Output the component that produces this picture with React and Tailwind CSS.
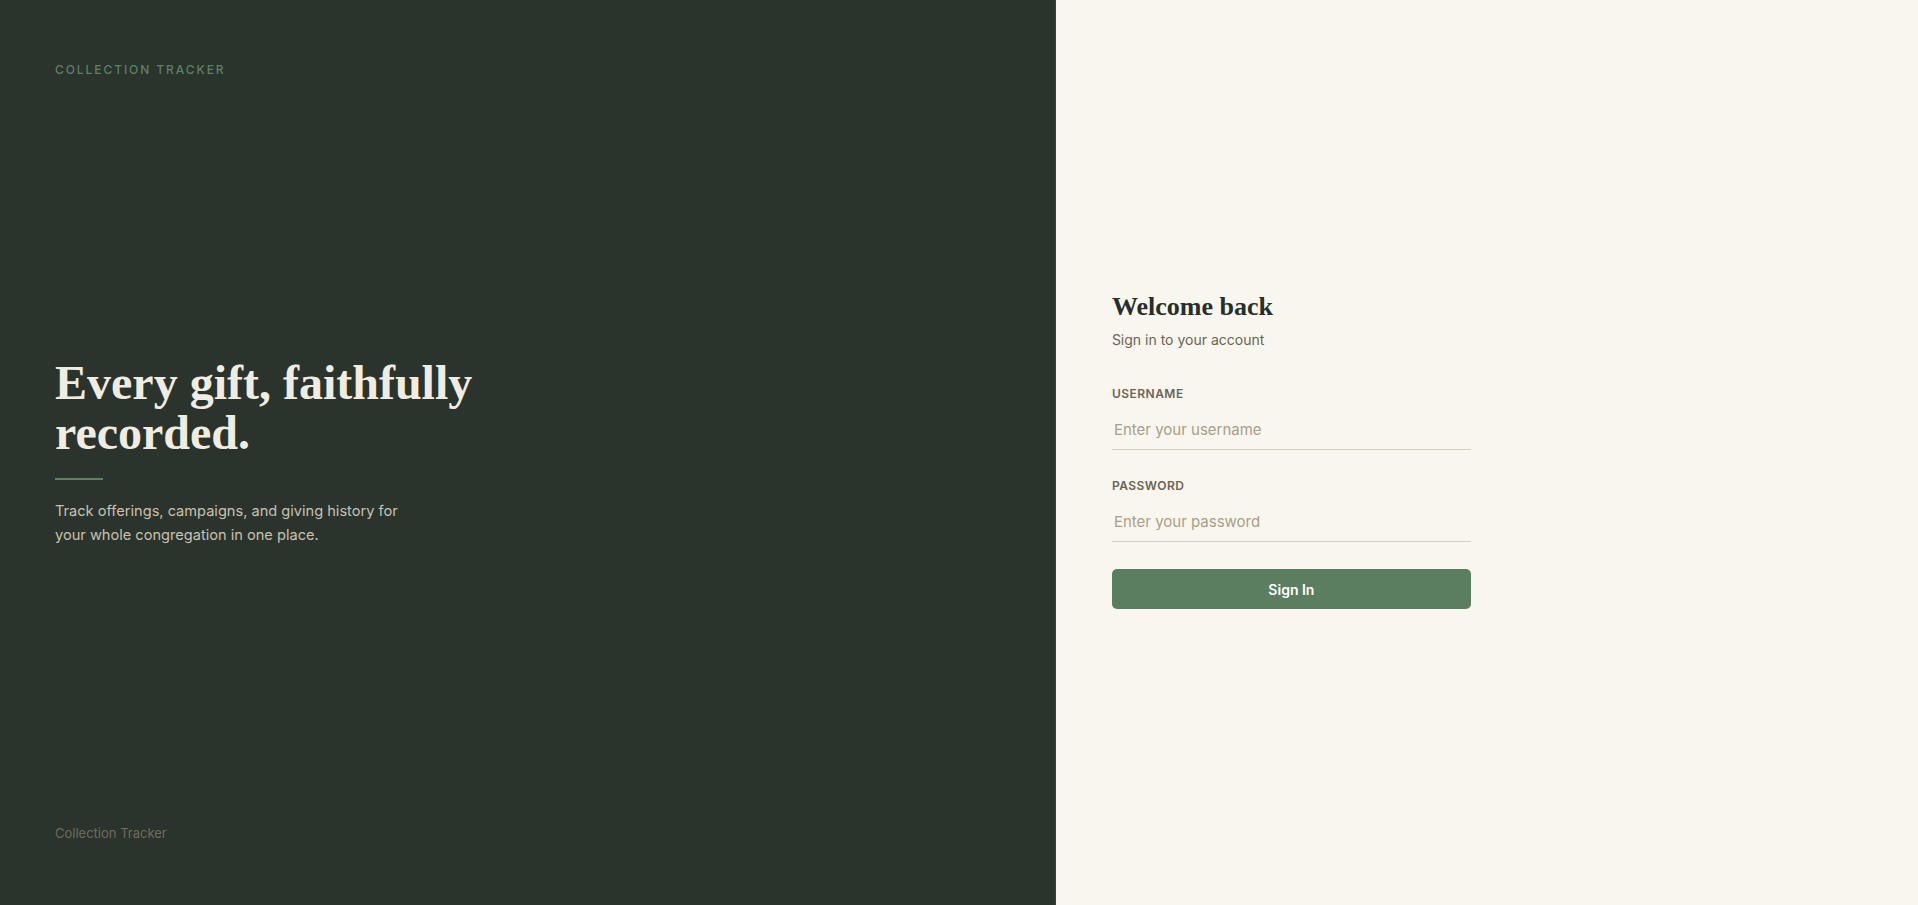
export default function App() {
  return (
    <div className="flex h-[905px] w-full font-['Inter','Noto_Sans',sans-serif]">
      {/* left brand panel */}
      <div className="flex w-[55%] flex-col justify-between bg-[#2a332c] px-[55px] pt-[62px] pb-[62px]">
        <div className="text-[12px] font-medium uppercase leading-4 tracking-[0.16em] text-[#5e8064]">
          Collection Tracker
        </div>

        <div className="pt-[4px]">
          <h1 className="font-['Liberation_Serif',serif] text-[48px] font-bold leading-[50px] text-[#f1ece1]">
            Every gift, faithfully
            <br />
            recorded.
          </h1>
          <div className="mt-[20px] h-[2px] w-[48px] bg-[#5e8064]" />
          <p className="mt-[19px] max-w-[360px] text-[14.6px] leading-6 text-[#c9c1b0]">
            Track offerings, campaigns, and giving history for your whole congregation in one place.
          </p>
        </div>

        <div className="text-[13px] leading-5 text-[#726c5c]">Collection Tracker</div>
      </div>

      {/* right form panel */}
      <div className="flex flex-1 items-center border-l border-[#3a433c] bg-[#f9f6ef] px-[56px] pb-[5px]">
        <form className="w-[359px]" onSubmit={(e) => e.preventDefault()}>
          <h2 className="font-['Liberation_Serif',serif] text-[26px] font-bold leading-8 text-[#26302a]">
            Welcome back
          </h2>
          <p className="mt-[7px] text-[14px] leading-5 text-[#6b6455]">Sign in to your account</p>

          <label className="mt-[36px] block text-[12px] font-semibold uppercase leading-4 tracking-[0.04em] text-[#6b6455]">
            Username
          </label>
          <input
            type="text"
            placeholder="Enter your username"
            className="mt-[8px] block h-[40px] w-full border-b border-[#d6cfbf] bg-transparent px-[2px] text-[15px] text-[#26302a] outline-none placeholder:text-[#a89f88]"
          />

          <label className="mt-[28px] block text-[12px] font-semibold uppercase leading-4 tracking-[0.04em] text-[#6b6455]">
            Password
          </label>
          <input
            type="password"
            placeholder="Enter your password"
            className="mt-[8px] block h-[40px] w-full border-b border-[#d6cfbf] bg-transparent px-[2px] text-[15px] text-[#26302a] outline-none placeholder:text-[#a89f88]"
          />

          <button
            type="submit"
            className="mt-[27px] flex h-[40px] w-full items-center justify-center rounded-[5px] bg-[#5b7d60] text-[14px] font-semibold text-white"
          >
            Sign In
          </button>
        </form>
      </div>
    </div>
  );
}
